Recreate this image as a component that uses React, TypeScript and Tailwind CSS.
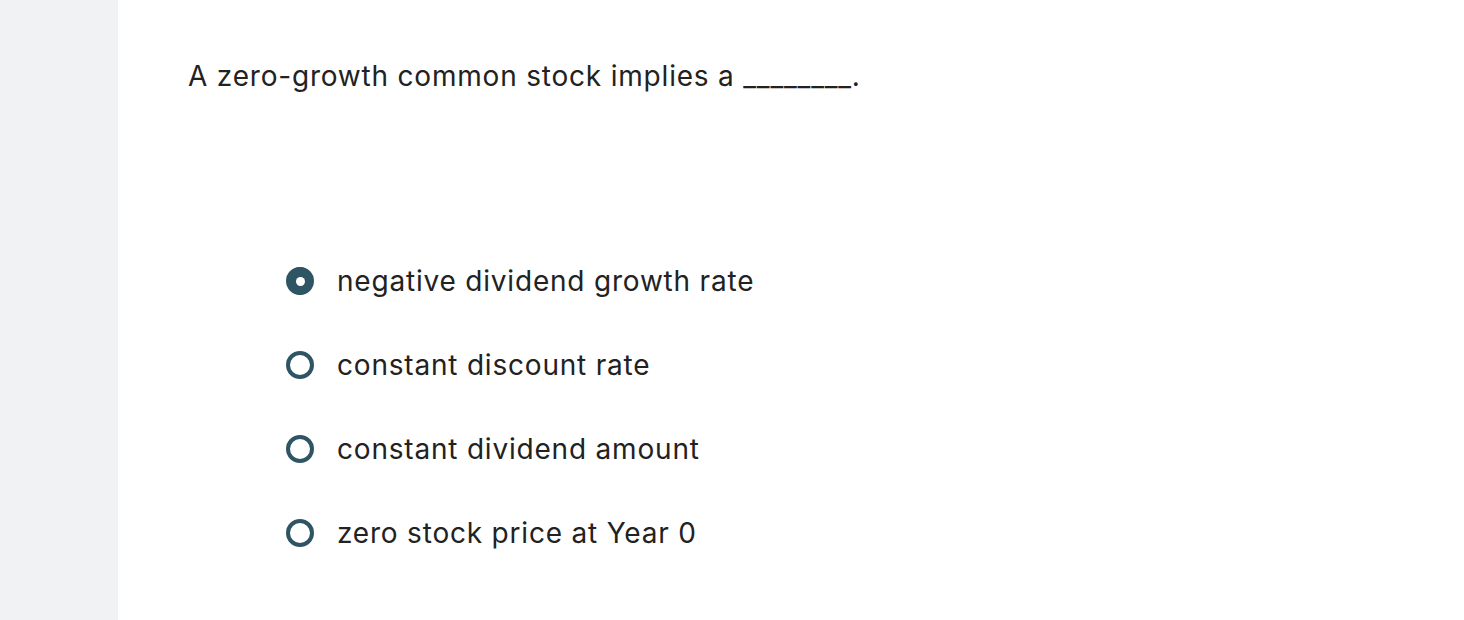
import React, { useState } from 'react';

const opciones = [
  'negative dividend growth rate',
  'constant discount rate',
  'constant dividend amount',
  'zero stock price at Year 0',
];

const App: React.FC = () => {
  const [seleccion, setSeleccion] = useState(0);

  return (
    <div
      className="flex min-h-[620px] w-full bg-white text-[#222222]"
      style={{ fontFamily: 'Inter, "Open Sans", sans-serif' }}
    >
      <div className="w-[118px] shrink-0 bg-[#f1f2f4]" />
      <div className="flex-1 pl-[70px] pt-[55px]">
        <p className="text-[28px] leading-[42px] tracking-[0.8px]">
          A zero-growth common stock implies a ________.
        </p>
        <ul className="mt-[164px] pl-[98px] flex flex-col gap-[44px]">
          {opciones.map((texto, i) => (
            <li
              key={texto}
              onClick={() => setSeleccion(i)}
              className="flex items-center gap-[23px] cursor-pointer h-[40px]"
            >
              <span className="w-[28px] h-[28px] rounded-full flex items-center justify-center shrink-0 border-[4px] border-[#2f5565] bg-white">
                {seleccion === i && (
                  <span className="w-[28px] h-[28px] rounded-full bg-[#2f5565] flex items-center justify-center">
                    <span className="w-[9px] h-[9px] rounded-full bg-white" />
                  </span>
                )}
              </span>
              <span className="text-[28px] leading-[40px] tracking-[0.8px]">{texto}</span>
            </li>
          ))}
        </ul>
      </div>
    </div>
  );
};

export default App;
